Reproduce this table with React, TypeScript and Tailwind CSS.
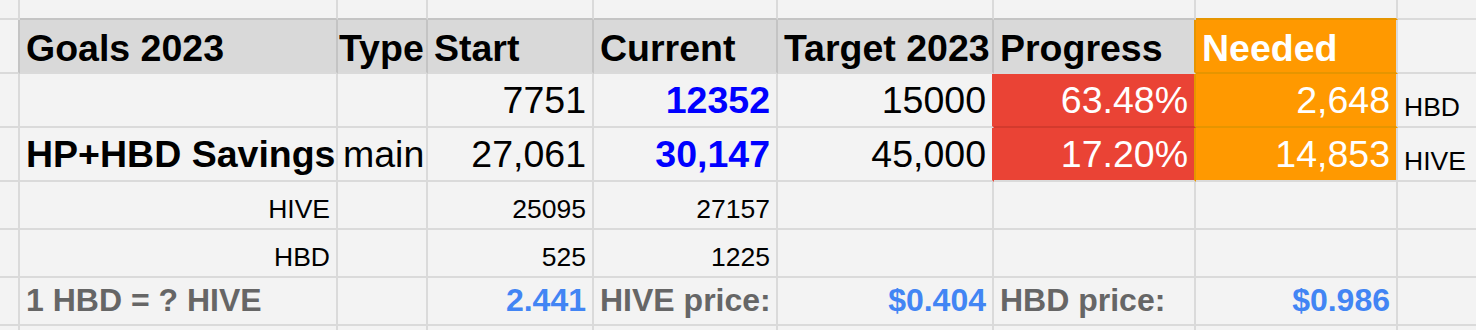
import React from "react";

type Cell = {
  text?: string;
  cls?: string;
};

const line = "border-[#dadada]";

const base =
  "box-border flex items-end overflow-hidden whitespace-nowrap border-r-2 border-b-2 px-[6px]";

// text styles
const head = "justify-start text-[37.5px] font-bold text-black pb-[5px]";
const num = "justify-end text-[37.5px] text-black pb-[7px]";
const numBlue = "justify-end text-[37.5px] font-bold text-[#0000ff] pb-[7px]";
const small = "text-[26.5px] text-black pb-[6px]";
const foot = "text-[32px] font-bold pb-[8px]";

const rows: Cell[][] = [
  [
    { cls: line },
    { cls: "border-r-[#dadada] border-b-[#c4c4c4]" },
    { cls: "border-r-[#dadada] border-b-[#c4c4c4]" },
    { cls: "border-r-[#dadada] border-b-[#c4c4c4]" },
    { cls: "border-r-[#dadada] border-b-[#c4c4c4]" },
    { cls: "border-r-[#dadada] border-b-[#c4c4c4]" },
    { cls: "border-r-[#dadada] border-b-[#c4c4c4]" },
    { cls: "border-r-[#dadada] border-b-[#e69500]" },
    { cls: line },
  ],
  [
    { cls: "border-r-[#c4c4c4] border-b-[#dadada]" },
    { text: "Goals 2023", cls: `${head} bg-[#d9d9d9] border-r-[#c4c4c4] border-b-[#dadada]` },
    { text: "Type", cls: `${head} !pl-[1px] bg-[#d9d9d9] border-r-[#c4c4c4] border-b-[#dadada]` },
    { text: "Start", cls: `${head} bg-[#d9d9d9] border-r-[#c4c4c4] border-b-[#dadada]` },
    { text: "Current", cls: `${head} bg-[#d9d9d9] border-r-[#c4c4c4] border-b-[#dadada]` },
    { text: "Target 2023", cls: `${head} bg-[#d9d9d9] border-r-[#c4c4c4] border-b-[#dadada]` },
    { text: "Progress", cls: `${head} bg-[#d9d9d9] border-r-[#e69500] border-b-[#dadada]` },
    { text: "Needed", cls: `${head} !text-white bg-[#ff9900] border-r-[#dadada] border-b-[#e69500]` },
    { cls: line },
  ],
  [
    { cls: line },
    { cls: line },
    { cls: line },
    { text: "7751", cls: `${num} ${line}` },
    { text: "12352", cls: `${numBlue} ${line}` },
    { text: "15000", cls: `${num} border-r-[#ea4335] border-b-[#dadada]` },
    { text: "63.48%", cls: `${num} !text-white bg-[#ea4335] border-r-[#e69500] border-b-[#d33a2d]` },
    { text: "2,648", cls: `${num} !text-white bg-[#ff9900] border-r-[#dadada] border-b-[#e69500]` },
    { text: "HBD", cls: `justify-start text-[26.5px] text-black pb-[6px] ${line}` },
  ],
  [
    { cls: line },
    { text: "HP+HBD Savings", cls: `${head} !pb-[7px] ${line}` },
    { text: "main", cls: `justify-start text-[37.5px] text-black pb-[7px] !pl-[5px] ${line}` },
    { text: "27,061", cls: `${num} ${line}` },
    { text: "30,147", cls: `${numBlue} ${line}` },
    { text: "45,000", cls: `${num} border-r-[#ea4335] border-b-[#dadada]` },
    { text: "17.20%", cls: `${num} !text-white bg-[#ea4335] border-r-[#e69500] border-b-[#dadada]` },
    { text: "14,853", cls: `${num} !text-white bg-[#ff9900] border-r-[#dadada] border-b-[#dadada]` },
    { text: "HIVE", cls: `justify-start text-[26.5px] text-black pb-[6px] ${line}` },
  ],
  [
    { cls: line },
    { text: "HIVE", cls: `justify-end ${small} ${line}` },
    { cls: line },
    { text: "25095", cls: `justify-end ${small} ${line}` },
    { text: "27157", cls: `justify-end ${small} ${line}` },
    { cls: line },
    { cls: line },
    { cls: line },
    { cls: line },
  ],
  [
    { cls: line },
    { text: "HBD", cls: `justify-end ${small} ${line}` },
    { cls: line },
    { text: "525", cls: `justify-end ${small} ${line}` },
    { text: "1225", cls: `justify-end ${small} ${line}` },
    { cls: line },
    { cls: line },
    { cls: line },
    { cls: line },
  ],
  [
    { cls: line },
    { text: "1 HBD = ? HIVE", cls: `justify-start ${foot} text-[#666666] ${line}` },
    { cls: line },
    { text: "2.441", cls: `justify-end ${foot} text-[#4285f4] ${line}` },
    { text: "HIVE price:", cls: `justify-start ${foot} text-[#666666] ${line}` },
    { text: "$0.404", cls: `justify-end ${foot} text-[#4285f4] ${line}` },
    { text: "HBD price:", cls: `justify-start ${foot} text-[#666666] ${line}` },
    { text: "$0.986", cls: `justify-end ${foot} text-[#4285f4] ${line}` },
    { cls: line },
  ],
  Array.from({ length: 9 }, () => ({ cls: `${line} !border-b-0` })),
];

export default function App() {
  return (
    <div className="h-[330px] w-[1476px] overflow-hidden bg-[#f3f3f3] font-['Liberation_Sans',Arial,sans-serif] leading-none">
      <div className="grid grid-cols-[20px_318px_90px_166px_184px_216px_202px_202px_78px] grid-rows-[20px_54px_54px_54px_48px_48px_48px_4px]">
        {rows.map((row, r) =>
          row.map((cell, c) => (
            <div
              key={`${r}-${c}`}
              className={`${base} ${cell.cls ?? ""} ${c === 8 ? "!border-r-0" : ""}`}
            >
              {cell.text}
            </div>
          ))
        )}
      </div>
    </div>
  );
}
